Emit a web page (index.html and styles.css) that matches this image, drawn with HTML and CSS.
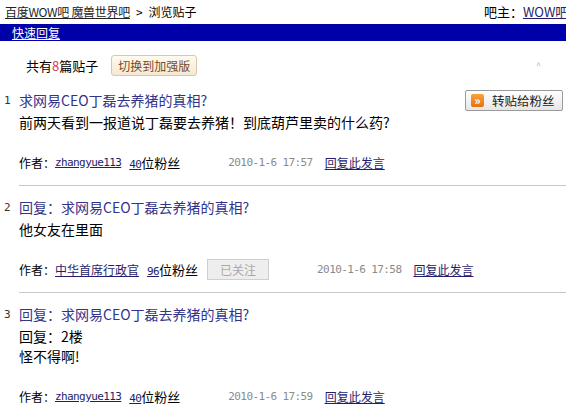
FILE: index.html
```html
<!DOCTYPE html>
<html lang="zh-CN">
<head>
    <meta charset="UTF-8">
    <meta name="viewport" content="width=device-width, initial-scale=1.0">
    <title>浏览贴子</title>
    <link rel="stylesheet" href="styles.css">
</head>
<body>
    <!-- 顶部导航 -->
    <div class="topbar">
        <div class="crumbs">
            <a href="#">百度WOW吧 魔兽世界吧</a><span class="gt">&gt;</span>浏览贴子
        </div>
        <div class="owner">吧主：<a href="#">WOW吧管理员</a></div>
    </div>

    <div class="bluebar">
        <a href="#">快速回复</a>
    </div>

    <div class="info">
        <span>共有<em>8</em>篇贴子</span>
        <button class="switch-btn">切换到加强版</button>
        <span class="caret">^</span>
    </div>

    <!-- 贴子 1 -->
    <div class="post">
        <div class="post-head">
            <span class="num">1</span>
            <a class="title" href="#">求网易CEO丁磊去养猪的真相?</a>
            <button class="forward-btn">
                <span class="fw-icon">&raquo;</span>转贴给粉丝
            </button>
        </div>
        <div class="post-body">
            <p>前两天看到一报道说丁磊要去养猪！到底葫芦里卖的什么药?</p>
        </div>
        <div class="post-meta">
            <span class="label">作者：</span><a class="user" href="#">zhangyue113</a>
            <span class="fans"><a href="#">40</a>位粉丝</span>
            <span class="date">2010-1-6 17:57</span>
            <a class="reply" href="#">回复此发言</a>
        </div>
    </div>
    <div class="sep"></div>

    <!-- 贴子 2 -->
    <div class="post">
        <div class="post-head">
            <span class="num">2</span>
            <a class="title" href="#">回复：求网易CEO丁磊去养猪的真相?</a>
        </div>
        <div class="post-body">
            <p>他女友在里面</p>
        </div>
        <div class="post-meta">
            <span class="label">作者：</span><a class="user cn" href="#">中华首席行政官</a>
            <span class="fans"><a href="#">96</a>位粉丝</span>
            <button class="followed-btn" disabled>已关注</button>
            <span class="date">2010-1-6 17:58</span>
            <a class="reply" href="#">回复此发言</a>
        </div>
    </div>
    <div class="sep"></div>

    <!-- 贴子 3 -->
    <div class="post">
        <div class="post-head">
            <span class="num">3</span>
            <a class="title" href="#">回复：求网易CEO丁磊去养猪的真相?</a>
        </div>
        <div class="post-body">
            <p>回复：2楼</p>
            <p>怪不得啊!</p>
        </div>
        <div class="post-meta">
            <span class="label">作者：</span><a class="user" href="#">zhangyue113</a>
            <span class="fans"><a href="#">40</a>位粉丝</span>
            <span class="date">2010-1-6 17:59</span>
            <a class="reply" href="#">回复此发言</a>
        </div>
    </div>
</body>
</html>
```

FILE: styles.css
```css
/* 页面基础 */
body {
    margin: 0;
    font-family: "Noto Sans CJK SC", "DejaVu Sans", sans-serif;
    font-size: 13px;
    color: #000;
    background: #fff;
    overflow: hidden;
}

a {
    color: #261c6c;
}

/* 顶部导航 */
.topbar {
    display: flex;
    height: 24px;
    line-height: 24px;
    font-size: 12px;
    white-space: nowrap;
    padding-left: 5px;
}

.topbar .crumbs {
    flex: 1;
}

.topbar .crumbs a {
    color: #222;
    letter-spacing: -0.3px;
}

.topbar .gt {
    margin: 0 6px;
}

.topbar .owner {
    width: 82px;
    overflow: hidden;
    font-size: 13px;
}

.bluebar {
    background-color: #0000a8;
    height: 17px;
    line-height: 17px;
    padding-left: 12px;
    font-size: 12px;
}

.bluebar a {
    color: #fff;
}

/* 贴子数量 */
.info {
    display: flex;
    align-items: center;
    padding: 14px 0 12px 26px;
    height: 21px;
    font-size: 13px;
}

.info em {
    font-style: normal;
    color: #e0394f;
}

.switch-btn {
    margin-left: 13px;
    height: 21px;
    padding: 0 6px;
    font-family: inherit;
    font-size: 12px;
    color: #7a4a1a;
    background: linear-gradient(#fffaf0, #f5e8d2);
    border: 1px solid #d9c7a8;
    border-radius: 3px;
}

.caret {
    margin-left: auto;
    margin-right: 25px;
    font-size: 9px;
    color: #bbb;
}

/* 贴子 */
.post-head {
    display: flex;
    align-items: center;
    height: 24px;
}

.num {
    width: 19px;
    padding-left: 4px;
    box-sizing: border-box;
    font-family: "DejaVu Sans Mono", monospace;
    font-size: 11px;
    color: #333;
}

.title {
    color: #33338a;
    text-decoration: none;
    font-size: 14px;
}

.forward-btn {
    margin-left: auto;
    margin-right: 3px;
    height: 21px;
    width: 98px;
    display: flex;
    align-items: center;
    gap: 8px;
    padding: 0 5px;
    white-space: nowrap;
    font-family: inherit;
    font-size: 12.5px;
    color: #222;
    background: linear-gradient(#ffffff, #e6e6e6);
    border: 1px solid #9a9a9a;
    border-radius: 2px;
}

.fw-icon {
    flex: none;
    width: 13px;
    height: 13px;
    line-height: 11px;
    font-size: 12px;
    font-weight: bold;
    text-align: center;
    color: #fff;
    background: linear-gradient(#f9a23a, #e86f0c);
    border-radius: 2px;
}

.post-body {
    padding-left: 19px;
    font-size: 14px;
    line-height: 20px;
}

.post-body p {
    margin: 0;
}

.post-meta {
    display: flex;
    align-items: center;
    margin-top: 18px;
    height: 24px;
    padding-left: 19px;
    font-size: 13px;
    white-space: nowrap;
}

.label {
    font-size: 12px;
}

.user {
    font-family: "DejaVu Sans Mono", monospace;
    font-size: 11px;
    letter-spacing: -0.6px;
}

.user.cn {
    font-family: inherit;
    font-size: 12px;
    letter-spacing: 0;
}

.fans {
    margin-left: 8px;
}

.fans a {
    font-family: "DejaVu Sans Mono", monospace;
    font-size: 11px;
    letter-spacing: -0.6px;
}

.followed-btn {
    margin-left: 9px;
    width: 62px;
    height: 21px;
    font-family: inherit;
    font-size: 12px;
    color: #aaa;
    background: #eeeeee;
    border: 1px solid #cfcfcf;
}

.date {
    margin-left: 48px;
    font-family: "DejaVu Sans Mono", monospace;
    font-size: 11px;
    letter-spacing: -0.6px;
    color: #8a8a8a;
}

.reply {
    margin-left: 12px;
    font-size: 12px;
}

.sep {
    margin: 11px 0 9px 19px;
    border-top: 1px solid #c8c8c8;
}
```
